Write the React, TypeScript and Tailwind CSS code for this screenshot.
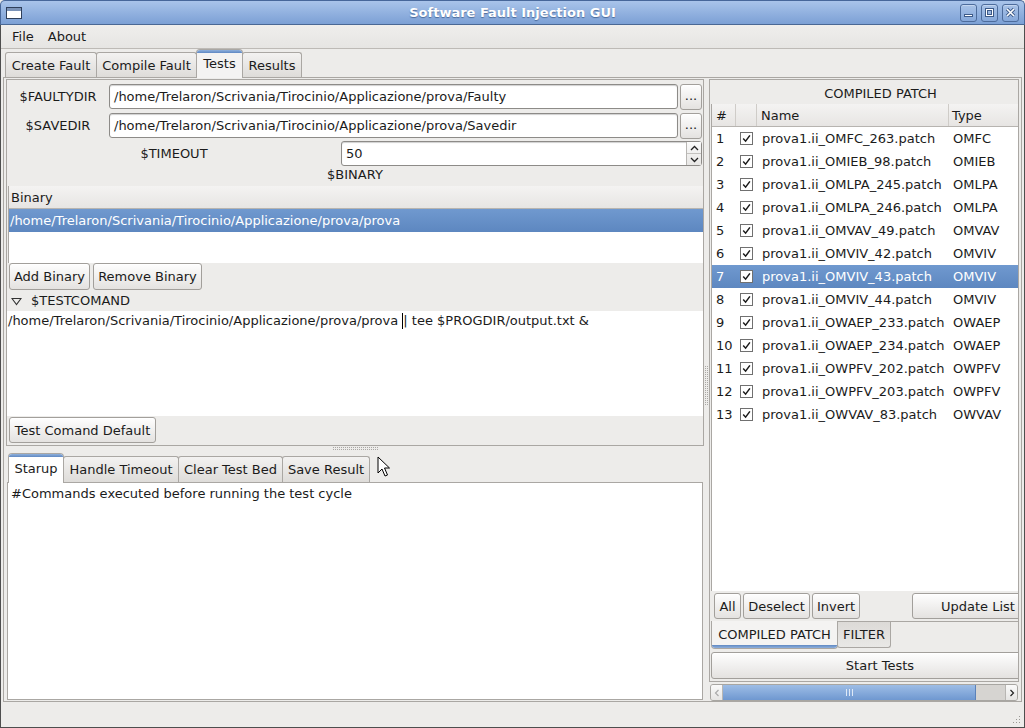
import React from "react";

const FONT = "font-['DejaVu_Sans',sans-serif]";

function Btn({ children, className = "" }: { children?: React.ReactNode; className?: string }) {
  return (
    <div
      className={
        "flex items-center justify-center rounded-[3px] border border-[#a29f9b] bg-linear-to-b from-[#fefefe] to-[#e4e2e0] text-[#1b1b1b] shadow-[inset_0_1px_0_#ffffff] whitespace-nowrap " +
        className
      }
    >
      {children}
    </div>
  );
}

function Check() {
  return (
    <div className="w-[13px] h-[13px] border border-[#707070] bg-white flex items-center justify-center shrink-0">
      <svg width="9" height="9" viewBox="0 0 9 9">
        <path d="M1.2 4.6 L3.6 7.2 L7.9 1.4" stroke="#1a1a1a" strokeWidth="1.5" fill="none" />
      </svg>
    </div>
  );
}

function TitleBtn({ kind }: { kind: "min" | "max" | "close" }) {
  return (
    <div className="w-[17px] h-[18px] rounded-[3px] border border-[#4d6c9c] bg-linear-to-b from-[#a8c2e7] to-[#86a8da] flex items-center justify-center shadow-[inset_0_1px_0_#c4d6f0]">
      <svg width="11" height="11" viewBox="0 0 11 11">
        {kind === "min" && <rect x="1.5" y="7.5" width="8" height="2" fill="#ffffff" stroke="#3d5a88" strokeWidth="1" />}
        {kind === "max" && (
          <>
            <rect x="1.5" y="1.5" width="8" height="8" fill="none" stroke="#3d5a88" strokeWidth="1" />
            <rect x="2.5" y="2.5" width="6" height="6" fill="none" stroke="#ffffff" strokeWidth="1" />
            <rect x="3.5" y="3.5" width="4" height="4" fill="none" stroke="#3d5a88" strokeWidth="1" />
          </>
        )}
        {kind === "close" && (
          <>
            <path d="M2 2 L9 9 M9 2 L2 9" stroke="#3d5a88" strokeWidth="3.2" />
            <path d="M2 2 L9 9 M9 2 L2 9" stroke="#ffffff" strokeWidth="1.6" />
          </>
        )}
      </svg>
    </div>
  );
}

const patches: [string, string][] = [
  ["prova1.ii_OMFC_263.patch", "OMFC"],
  ["prova1.ii_OMIEB_98.patch", "OMIEB"],
  ["prova1.ii_OMLPA_245.patch", "OMLPA"],
  ["prova1.ii_OMLPA_246.patch", "OMLPA"],
  ["prova1.ii_OMVAV_49.patch", "OMVAV"],
  ["prova1.ii_OMVIV_42.patch", "OMVIV"],
  ["prova1.ii_OMVIV_43.patch", "OMVIV"],
  ["prova1.ii_OMVIV_44.patch", "OMVIV"],
  ["prova1.ii_OWAEP_233.patch", "OWAEP"],
  ["prova1.ii_OWAEP_234.patch", "OWAEP"],
  ["prova1.ii_OWPFV_202.patch", "OWPFV"],
  ["prova1.ii_OWPFV_203.patch", "OWPFV"],
  ["prova1.ii_OWVAV_83.patch", "OWVAV"],
];

function Dots({ cols, rows }: { cols: number; rows: number }) {
  const items = [];
  for (let r = 0; r < rows; r++)
    for (let c = 0; c < cols; c++)
      items.push(<rect key={r + "-" + c} x={c * 2} y={r * 2} width="1" height="1" fill="#a9a7a4" />);
  return (
    <svg width={cols * 2} height={rows * 2}>
      {items}
    </svg>
  );
}

export default function App() {
  return (
    <div className={FONT + " w-[1025px] h-[728px] flex flex-col text-[13px] text-[#1b1b1b] leading-none bg-[#edecea] relative overflow-hidden"}>
      {/* Title bar */}
      <div className="h-[24px] shrink-0 rounded-t-[5px] border border-b-0 border-[#47679a] bg-linear-to-b from-[#a9c4ea] to-[#7ca0d5] flex items-center relative">
        <div className="ml-[5px] w-[16px] h-[12px] border border-[#2f3f5a] bg-white flex flex-col">
          <div className="h-[3px] bg-[#7b93b8]" />
        </div>
        <div className="absolute left-0 right-0 top-0 h-[23px] flex items-center justify-center pointer-events-none">
          <span className="font-bold text-white text-[13px] [text-shadow:0_1px_1px_#4a6a9a]">Software Fault Injection GUI</span>
        </div>
        <div className="ml-auto mr-[5px] flex gap-[4px]">
          <TitleBtn kind="min" />
          <TitleBtn kind="max" />
          <TitleBtn kind="close" />
        </div>
      </div>
      <div className="h-px bg-[#4a6894] shrink-0" />

      {/* Body */}
      <div className="flex-1 flex flex-col border-l border-r border-b border-[#4e4e4e] min-h-0">
        {/* Menu */}
        <div className="h-[23px] shrink-0 flex items-center bg-linear-to-b from-[#efeeec] to-[#e6e5e3]">
          <span className="ml-[11px]">File</span>
          <span className="ml-[14px]">About</span>
        </div>
        <div className="h-px bg-[#bdbab6] shrink-0" />

        {/* Main tab bar */}
        <div className="h-[28px] shrink-0 flex items-end pl-[4px] relative z-10">
          <div className="w-[92px] h-[25px] flex items-center justify-center pt-px rounded-t-[3px] border border-b-0 border-[#aaa7a3] bg-linear-to-b from-[#f3f2f1] to-[#dedcd9]">
            Create Fault
          </div>
          <div className="w-[101px] h-[25px] -ml-px flex items-center justify-center pt-px rounded-t-[3px] border border-b-0 border-[#aaa7a3] bg-linear-to-b from-[#f3f2f1] to-[#dedcd9]">
            Compile Fault
          </div>
          <div className="w-[47px] h-[29px] -ml-px -mb-px flex flex-col rounded-t-[4px] border border-b-0 border-[#aaa7a3] bg-[#f4f3f2] overflow-hidden">
            <div className="h-[3px] bg-linear-to-b from-[#8fb0dc] to-[#5f88c2] shrink-0" />
            <div className="flex-1 flex items-center justify-center pb-[4px]">Tests</div>
          </div>
          <div className="w-[60px] h-[25px] -ml-px flex items-center justify-center pt-px rounded-t-[3px] border border-b-0 border-[#aaa7a3] bg-linear-to-b from-[#f3f2f1] to-[#dedcd9]">
            Results
          </div>
        </div>

        {/* Tab pane */}
        <div className="mx-[2px] h-[625px] shrink-0 border border-[#aaa7a3] flex pl-[1px]">
          {/* Left column */}
          <div className="w-[698px] ml-px pt-px flex flex-col">
            {/* Top frame */}
            <div className="h-[367px] shrink-0 border border-[#aaa7a3] flex flex-col">
              <div className="h-[4px]" />
              <div className="h-[25px] flex items-center">
                <div className="w-[102px] text-center">$FAULTYDIR</div>
                <div className="flex-1 h-full rounded-[3px] border border-[#8d8b88] bg-white flex items-center pl-[4px] shadow-[inset_0_1px_1px_#d0d0d0]">
                  /home/Trelaron/Scrivania/Tirocinio/Applicazione/prova/Faulty
                </div>
                <Btn className="w-[22px] h-[26px] ml-[2px] mr-px pb-[2px]">...</Btn>
              </div>
              <div className="h-[4px]" />
              <div className="h-[25px] flex items-center">
                <div className="w-[102px] text-center">$SAVEDIR</div>
                <div className="flex-1 h-full rounded-[3px] border border-[#8d8b88] bg-white flex items-center pl-[4px] shadow-[inset_0_1px_1px_#d0d0d0]">
                  /home/Trelaron/Scrivania/Tirocinio/Applicazione/prova/Savedir
                </div>
                <Btn className="w-[22px] h-[26px] ml-[2px] mr-px pb-[2px]">...</Btn>
              </div>
              <div className="h-[3px]" />
              <div className="h-[25px] flex items-center">
                <div className="w-[334px] text-center">$TIMEOUT</div>
                <div className="flex-1 h-full mr-px rounded-[3px] border border-[#8d8b88] bg-white flex items-stretch shadow-[inset_0_1px_1px_#d0d0d0]">
                  <div className="flex-1 flex items-center pl-[4px]">50</div>
                  <div className="w-[15px] border-l border-[#b8b6b3] flex flex-col bg-linear-to-b from-[#fafafa] to-[#e8e7e5]">
                    <div className="flex-1 flex items-center justify-center border-b border-[#c4c2bf]">
                      <svg width="9" height="6" viewBox="0 0 9 6"><path d="M1 5 L4.5 1.5 L8 5" stroke="#222" strokeWidth="1.3" fill="none" /></svg>
                    </div>
                    <div className="flex-1 flex items-center justify-center">
                      <svg width="9" height="6" viewBox="0 0 9 6"><path d="M1 1 L4.5 4.5 L8 1" stroke="#222" strokeWidth="1.3" fill="none" /></svg>
                    </div>
                  </div>
                </div>
              </div>
              <div className="h-[17px] flex items-center justify-center">$BINARY</div>
              <div className="h-[3px]" />
              {/* Binary table */}
              <div className="h-[77px] ml-px mr-0 bg-white flex flex-col border-l border-[#aaa7a3]">
                <div className="h-[23px] shrink-0 flex items-center pl-[2px] bg-linear-to-b from-[#f4f3f2] to-[#e7e5e3] border-b border-[#b7b4b0]">
                  Binary
                </div>
                <div className="h-[23px] shrink-0 flex items-center pl-[1px] text-white bg-linear-to-b from-[#7099cf] to-[#5d87c0]">
                  /home/Trelaron/Scrivania/Tirocinio/Applicazione/prova/prova
                </div>
              </div>
              <div className="h-[27px] flex items-end pl-[2px] gap-[3px] pb-0">
                <Btn className="w-[81px] h-[27px]">Add Binary</Btn>
                <Btn className="w-[109px] h-[27px]">Remove Binary</Btn>
              </div>
              <div className="h-[21px] flex items-center pl-[4px]">
                <svg width="11" height="9" viewBox="0 0 11 9" className="mt-[1px]">
                  <path d="M1 1.5 L10 1.5 L5.5 7.5 Z" fill="none" stroke="#333" strokeWidth="1.1" />
                </svg>
                <span className="ml-[9px]">$TESTCOMAND</span>
              </div>
              <div className="h-[105px] bg-white pl-px pt-[2px]">
                <div className="h-[15px] flex items-center whitespace-pre">
                  /home/Trelaron/Scrivania/Tirocinio/Applicazione/prova/prova{" "}
                  <span className="inline-block w-px h-[16px] bg-black" />
                  <span>| tee $PROGDIR/output.txt &amp;</span>
                </div>
              </div>
              <div className="h-px" />
              <div className="h-[26px] flex pl-[2px]">
                <Btn className="w-[147px] h-[26px]">Test Comand Default</Btn>
              </div>
              <div className="flex-1" />
            </div>

            {/* Splitter */}
            <div className="h-[6px] shrink-0 flex items-center justify-center pl-[2px]">
              <Dots cols={23} rows={2} />
            </div>

            {/* Bottom tab widget */}
            <div className="flex-1 flex flex-col px-[1px] pb-px">
              <div className="h-[30px] shrink-0 flex items-end pl-[1px] relative z-10">
                <div className="w-[56px] h-[30px] -mb-px flex flex-col rounded-t-[4px] border border-b-0 border-[#aaa7a3] bg-white overflow-hidden">
                  <div className="h-[3px] bg-linear-to-b from-[#8fb0dc] to-[#5f88c2] shrink-0" />
                  <div className="flex-1 flex items-center justify-center pb-[3px]">Starup</div>
                </div>
                <div className="w-[116px] h-[26px] -ml-px flex items-center justify-center rounded-t-[3px] border border-b-0 border-[#aaa7a3] bg-linear-to-b from-[#f3f2f1] to-[#dedcd9]">
                  Handle Timeout
                </div>
                <div className="w-[105px] h-[26px] -ml-px flex items-center justify-center rounded-t-[3px] border border-b-0 border-[#aaa7a3] bg-linear-to-b from-[#f3f2f1] to-[#dedcd9]">
                  Clear Test Bed
                </div>
                <div className="w-[88px] h-[26px] -ml-px flex items-center justify-center rounded-t-[3px] border border-b-0 border-[#aaa7a3] bg-linear-to-b from-[#f3f2f1] to-[#dedcd9]">
                  Save Result
                </div>
              </div>
              <div className="flex-1 border border-[#aaa7a3] bg-white pl-[3px] pt-[3px]">
                <div className="h-[14px] flex items-center">#Commands executed before running the test cycle</div>
              </div>
            </div>
          </div>

          {/* Vertical splitter */}
          <div className="w-[5px] shrink-0 flex items-center justify-center pb-[8px]">
            <Dots cols={2} rows={20} />
          </div>

          {/* Right column */}
          <div className="w-[312px] shrink-0 flex flex-col pt-px">
            <div className="h-[603px] shrink-0 w-[310px] border border-[#aaa7a3] overflow-hidden">
              <div className="w-[340px] h-full flex flex-col pl-px">
                <div className="h-[24px] shrink-0 flex items-center justify-center pt-[2px]">COMPILED PATCH</div>
                {/* Patch table */}
                <div className="h-[487px] shrink-0 bg-white border-l border-[#aaa7a3] flex flex-col">
                  <div className="h-[23px] shrink-0 flex items-stretch bg-linear-to-b from-[#f4f3f2] to-[#e7e5e3] border-b border-[#b7b4b0]">
                    <div className="w-[24px] flex items-center pl-[4px] border-r border-[#cfccc8]">#</div>
                    <div className="w-[21px] border-r border-[#cfccc8]" />
                    <div className="w-[192px] flex items-center pl-[4px] border-r border-[#cfccc8]">Name</div>
                    <div className="flex-1 flex items-center pl-[3px]">Type</div>
                  </div>
                  {patches.map(([name, type], i) => {
                    const sel = i === 6;
                    return (
                      <div
                        key={name}
                        className={
                          "h-[23px] shrink-0 flex items-center " +
                          (sel ? "text-white bg-linear-to-b from-[#7099cf] to-[#5d87c0]" : "")
                        }
                      >
                        <div className="w-[24px] pl-[4px]">{i + 1}</div>
                        <div className="w-[21px] pl-[4px] flex items-center">
                          <Check />
                        </div>
                        <div className="w-[192px] pl-[5px] whitespace-nowrap">{name}</div>
                        <div className="flex-1 pl-[4px]">{type}</div>
                      </div>
                    );
                  })}
                </div>
                <div className="h-[2px]" />
                <div className="h-[26px] shrink-0 flex pl-[3px]">
                  <Btn className="w-[27px] h-[26px]">All</Btn>
                  <Btn className="w-[67px] h-[26px] ml-[2px]">Deselect</Btn>
                  <Btn className="w-[48px] h-[26px] ml-[2px]">Invert</Btn>
                  <Btn className="w-[128px] h-[26px] ml-[52px] justify-start pl-[28px]">Update List</Btn>
                </div>
                <div className="h-[3px]" />
                {/* South tabs */}
                <div className="h-[28px] shrink-0 flex items-start border-t border-[#aaa7a3] -mt-px">
                  <div className="w-[127px] h-[28px] -mt-px flex flex-col rounded-b-[4px] border border-t-0 border-[#aaa7a3] bg-[#f4f3f2] overflow-hidden">
                    <div className="flex-1 flex items-center justify-center pt-[2px]">COMPILED PATCH</div>
                    <div className="h-[3px] bg-linear-to-b from-[#5f88c2] to-[#8fb0dc] shrink-0" />
                  </div>
                  <div className="w-[54px] h-[26px] -ml-px flex items-center justify-center rounded-b-[3px] border border-t-0 border-[#aaa7a3] bg-linear-to-b from-[#dcdad7] to-[#e9e8e6]">
                    FILTER
                  </div>
                </div>
                <div className="h-[3px]" />
                <Btn className="w-[338px] h-[27px]">Start Tests</Btn>
              </div>
            </div>
            <div className="h-[2px]" />
            {/* Scrollbar */}
            <div className="h-[17px] w-[308px] ml-px flex items-stretch rounded-[3px] border border-[#a8a6a2] bg-[#d6d4d1] overflow-hidden">
              <div className="w-[12px] flex items-center justify-center bg-linear-to-b from-[#fafafa] to-[#e6e5e3] border-r border-[#b8b6b3]">
                <svg width="6" height="8" viewBox="0 0 6 8"><path d="M4.5 1 L1.5 4 L4.5 7" stroke="#aaa" strokeWidth="1.2" fill="none" /></svg>
              </div>
              <div className="w-[253px] flex items-center justify-center bg-linear-to-b from-[#9ebde6] to-[#6f98d0] border-r border-[#5b82ba]">
                <svg width="7" height="7" viewBox="0 0 7 7"><path d="M0.5 0 V7 M3.5 0 V7 M6.5 0 V7" stroke="#dfe9f7" strokeWidth="1" /></svg>
              </div>
              <div className="flex-1" />
              <div className="w-[12px] flex items-center justify-center bg-linear-to-b from-[#fafafa] to-[#e6e5e3] border-l border-[#b8b6b3]">
                <svg width="6" height="8" viewBox="0 0 6 8"><path d="M1.5 1 L4.5 4 L1.5 7" stroke="#222" strokeWidth="1.2" fill="none" /></svg>
              </div>
            </div>
          </div>
        </div>

        {/* Status bar */}
        <div className="flex-1 relative">
          <div className="absolute right-[3px] bottom-[3px]">
            <svg width="10" height="10" viewBox="0 0 10 10">
              {[[8, 2], [8, 5], [8, 8], [5, 5], [5, 8], [2, 8]].map(([x, y]) => (
                <rect key={x + "-" + y} x={x} y={y} width="1" height="1" fill="#9a9895" />
              ))}
            </svg>
          </div>
        </div>
      </div>

      {/* Mouse cursor */}
      <div className="absolute left-[377px] top-[456px] pointer-events-none">
        <svg width="14" height="22" viewBox="0 0 14 22">
          <path d="M1 1 L1 17 L5 13 L8 20 L10.5 19 L7.5 12 L12.5 12 Z" fill="#ffffff" stroke="#000000" strokeWidth="1" strokeLinejoin="round" />
        </svg>
      </div>
    </div>
  );
}
